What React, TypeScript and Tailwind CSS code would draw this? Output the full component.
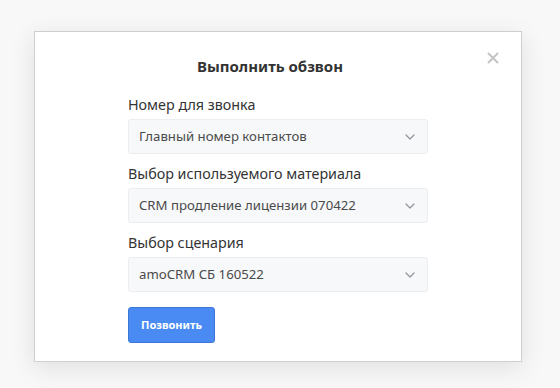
import React from "react";

function Chevron() {
  return (
    <svg width="10" height="6" viewBox="0 0 10 6" fill="none" className="shrink-0">
      <path d="M1 1l4 4l4-4" stroke="#8f949b" strokeWidth="1.2" strokeLinecap="round" strokeLinejoin="round" />
    </svg>
  );
}

function Field({ label, value }: { label: string; value: string }) {
  return (
    <div className="flex flex-col">
      <div className="text-[14.3px] leading-[20px] text-[#333] h-[28px] pt-[4px]">{label}</div>
      <div className="h-[35px] flex items-center justify-between pl-[10px] pr-[12px] bg-[#f7f8fa] border border-[#ebedf0] rounded-[3px] text-[13.2px] text-[#4a4a4a]">
        <span>{value}</span>
        <Chevron />
      </div>
    </div>
  );
}

export default function App() {
  return (
    <div
      className="w-[560px] h-[388px] bg-[#f8f8f8] pt-[31px] pl-[34px]"
      style={{ fontFamily: '"Noto Sans", "Open Sans", sans-serif' }}
    >
      <div className="relative w-[488px] h-[331px] bg-white border border-[#cfcfcf] shadow-[0_6px_24px_rgba(0,0,0,0.10)]">
        <div className="absolute right-[22px] top-[20px]">
          <svg width="12" height="12" viewBox="0 0 12 12">
            <path d="M1.5 1.5l9 9M10.5 1.5l-9 9" stroke="#c4c4c4" strokeWidth="2" strokeLinecap="round" />
          </svg>
        </div>
        <div className="pt-[22px] text-center pr-[16px] text-[15px] font-bold text-[#333] leading-[24px]">
          Выполнить обзвон
        </div>
        <div className="w-[300px] ml-[93px] mt-[13px] flex flex-col gap-[6px]">
          <Field label="Номер для звонка" value="Главный номер контактов" />
          <Field label="Выбор используемого материала" value="CRM продление лицензии 070422" />
          <Field label="Выбор сценария" value="amoCRM СБ 160522" />
          <div className="mt-[9px]">
            <button className="h-[36px] w-[87px] rounded-[3px] bg-[#4a8af3] border border-[#3d78d9] text-white text-[11px] font-bold">
              Позвонить
            </button>
          </div>
        </div>
      </div>
    </div>
  );
}
